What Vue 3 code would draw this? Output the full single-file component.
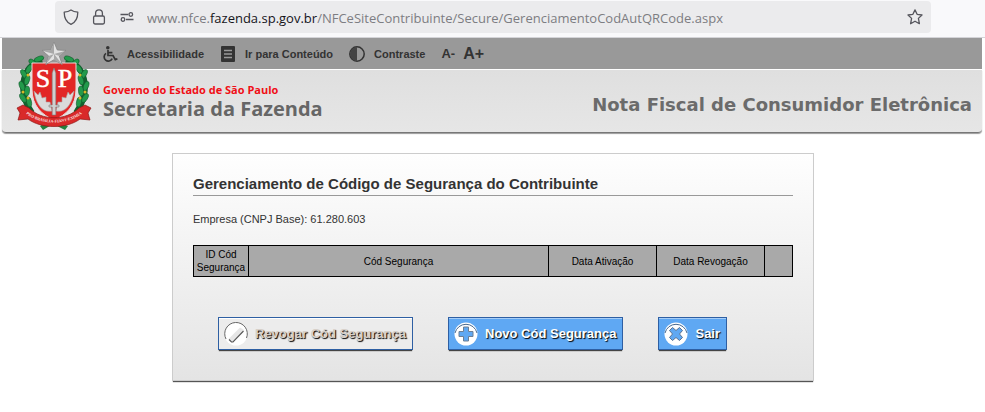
<template>
  <div class="browser-bar">
    <div class="url-box">
      <svg class="url-icon" viewBox="0 0 16 16">
        <path d="M8 1 C6 2.4 3.6 3 1.2 3.2 C1.2 9.2 3.2 13.2 8 15.3 C12.8 13.2 14.8 9.2 14.8 3.2 C12.4 3 10 2.4 8 1 Z" />
      </svg>
      <svg class="url-icon" viewBox="0 0 16 16">
        <rect x="2.6" y="7" width="10.8" height="8" rx="1.4" />
        <path d="M4.6 7 V4.2 a3.4 3.4 0 0 1 6.8 0 V7" />
      </svg>
      <svg class="url-icon" viewBox="0 0 16 16">
        <path d="M1.5 5.5 H9.2 M7 10.5 H14.5" />
        <circle cx="11.8" cy="5.5" r="1.8" />
        <circle cx="4" cy="10.5" r="1.8" />
      </svg>
      <div class="url">www.nfce.<b>fazenda.sp.gov.br</b>/NFCeSiteContribuinte/Secure/GerenciamentoCodAutQRCode.aspx</div>
      <button class="fav" aria-label="Favoritos">
        <svg class="url-icon" viewBox="0 0 16 16">
          <path d="M8 0.9 L10.1 5.3 L15 6 L11.4 9.4 L12.4 14.7 L8 12.2 L3.6 14.7 L4.6 9.4 L1 6 L5.9 5.3 Z" />
        </svg>
      </button>
    </div>
  </div>

  <header class="header">
    <svg class="brasao" viewBox="0 0 78 90">
      <!-- ramos -->
      <path d="M27 19 C4 26 4 54 17 72 M51 19 C74 26 74 54 61 72" fill="none" stroke="#14602f" stroke-width="6" />
      <g v-for="(l, i) in leaves" :key="i" :transform="`translate(${l[0]} ${l[1]}) rotate(${l[2]})`">
        <ellipse rx="5" ry="2.5" fill="#239a4b" stroke="#0f5a2b" stroke-width="0.6" />
      </g>
      <g fill="#d9b928">
        <circle v-for="(b, i) in berries" :key="i" :cx="b[0]" :cy="b[1]" r="1.5" />
      </g>
      <path d="M25 85 L36 78 L53 85 L50 89 L38 83 L28 89 Z" fill="#23823e" />
      <!-- escudo -->
      <path d="M17 22 H61 V48 C61 65 51 74 39 79 C27 74 17 65 17 48 Z" fill="#e22626" stroke="#ead9d9" stroke-width="1" />
      <path d="M37 70 C27 72 21 63 19 50 L23 54 L25 51 L27 57 L31 56 L31 61 L35 61 Z" fill="#dadada" stroke="#b09a9a" stroke-width="0.6" />
      <path d="M41 70 C51 72 57 63 59 50 L55 54 L53 51 L51 57 L47 56 L47 61 L43 61 Z" fill="#dadada" stroke="#b09a9a" stroke-width="0.6" />
      <path d="M39 27 L40.8 32 V64 H44 V66 H40.8 V74 H37.2 V66 H34 V64 H37.2 V32 Z" fill="#cfcfcf" stroke="#7c7c7c" stroke-width="0.6" />
      <text x="28" y="46" class="sigla">S</text>
      <text x="50" y="46" class="sigla">P</text>
      <!-- faixa -->
      <path d="M2 67 L8 64 L14 67 C27 80 51 80 64 67 L70 64 L76 67 L73 72 L75 79 L65 78 C52 88 26 88 13 78 L3 79 L5 72 Z" fill="#d92a2a" stroke="#8e1515" stroke-width="0.7" />
      <path id="faixa" d="M9 71 C24 85 54 85 69 71" fill="none" />
      <text class="lema"><textPath href="#faixa" startOffset="50%">PRO·BRASILIA·FIANT·EXIMIA</textPath></text>
      <!-- estrela -->
      <path d="M39 1 L42.3 9 L51 9.4 L44.3 15 L47.2 23.5 L39 18.7 L30.8 23.5 L33.7 15 L27 9.4 L35.7 9 Z" fill="#e2e2e2" stroke="#858585" stroke-width="0.8" />
      <path d="M39 2 V13 L35.7 9 Z M50 10 L39 13 L44.3 15 Z M46.5 22.5 L39 13 V18.7 Z M31.5 22.5 L39 13 L33.7 15 Z M28 10 L39 13 L35.7 9 Z" fill="#a8a8a8" />
    </svg>

    <nav class="access">
      <a href="#">
        <svg class="ico" viewBox="0 0 16 16">
          <circle cx="5.8" cy="1.8" r="1.8" fill="#333" />
          <path d="M6 4 V9.5 H11 L13.3 13.6 L15.4 12.7 M6.5 6.6 H10.4 M4 7.4 A4.2 4.2 0 1 0 10.2 12.6" fill="none" stroke="#333" stroke-width="1.7" />
        </svg>
        Acessibilidade
      </a>
      <a href="#">
        <svg class="ico" viewBox="0 0 16 16">
          <rect x="1" y="0" width="14" height="16" rx="1" fill="#333" />
          <path d="M4 4.5 H12 M4 8 H12 M4 11.5 H12" stroke="#999" stroke-width="1.4" />
        </svg>
        Ir para Conteúdo
      </a>
      <a href="#">
        <svg class="ico" viewBox="0 0 16 16">
          <circle cx="8" cy="8" r="7.2" fill="#999" stroke="#333" stroke-width="1.5" />
          <path d="M8 1 A7 7 0 0 0 8 15 Z" fill="#444" />
        </svg>
        Contraste
      </a>
      <a href="#" class="menor">A-</a>
      <a href="#" class="maior">A+</a>
    </nav>

    <div class="banner">
      <div class="orgao">
        <span class="governo">Governo do Estado de São Paulo</span>
        <span class="secretaria">Secretaria da Fazenda</span>
      </div>
      <h1>Nota Fiscal de Consumidor Eletrônica</h1>
    </div>
  </header>

  <main class="content">
    <section class="panel">
      <h2>Gerenciamento de Código de Segurança do Contribuinte</h2>
      <p class="empresa">Empresa (CNPJ Base): {{ cnpjBase }}</p>
      <table>
        <colgroup>
          <col class="c-id" />
          <col />
          <col class="c-data" />
          <col class="c-data" />
          <col class="c-sel" />
        </colgroup>
        <thead>
          <tr>
            <th v-for="(c, i) in colunas" :key="i">{{ c }}</th>
          </tr>
        </thead>
      </table>
      <div class="acoes">
        <button class="btn revogar" disabled>
          <svg viewBox="0 0 24 24">
            <circle cx="12" cy="12" r="11.5" fill="#fff" />
            <path d="M2 17 A11.3 11.3 0 1 1 22.5 16" fill="none" stroke="#666" stroke-width="1" />
            <path d="M4.5 17 L16 5.5 L20 8 L9 20 Z" fill="#e6e6e6" />
            <path d="M5 17.5 L7.5 20 H9 L19.5 9" fill="none" stroke="#555" stroke-width="1.1" />
          </svg>
          Revogar Cód Segurança
        </button>
        <button class="btn">
          <svg viewBox="0 0 24 24">
            <circle cx="12" cy="12" r="11.5" fill="#fff" />
            <path d="M1 11 A11.3 11.3 0 0 1 23 11" fill="none" stroke="#46688f" stroke-width="1" />
            <path d="M9.5 5 H14.5 V9.5 H19 V14.5 H14.5 V19 H9.5 V14.5 H5 V9.5 H9.5 Z" fill="#5fa8f3" stroke="#6b7f96" stroke-width="1" stroke-linejoin="round" />
          </svg>
          Novo Cód Segurança
        </button>
        <button class="btn">
          <svg viewBox="0 0 24 24">
            <circle cx="12" cy="12" r="11.5" fill="#fff" />
            <path d="M1 11 A11.3 11.3 0 0 1 23 11" fill="none" stroke="#46688f" stroke-width="1" />
            <path d="M8.5 5.5 L12 8.5 L15.5 5.5 L18.5 8.5 L15.5 12 L18.5 15.5 L15.5 18.5 L12 15.5 L8.5 18.5 L5.5 15.5 L8.5 12 L5.5 8.5 Z" fill="#5fa8f3" stroke="#5a7292" stroke-width="1" stroke-linejoin="round" />
          </svg>
          Sair
        </button>
      </div>
    </section>
  </main>
</template>

<script setup>
import { ref } from "vue";

const cnpjBase = ref("61.280.603");

const colunas = [
  "ID Cód Segurança",
  "Cód Segurança",
  "Data Ativação",
  "Data Revogação",
  "",
];

// folhas do brasão: x, y, rotação (lado esquerdo, espelhado no direito)
const lado = [
  [24, 18, -20],
  [18, 22, 40],
  [14, 28, -60],
  [9, 33, 60],
  [12, 39, -75],
  [7, 45, 70],
  [12, 50, -85],
  [8, 57, 60],
  [14, 61, 80],
];
const leaves = [...lado, ...lado.map(([x, y, r]) => [78 - x, y, -r])];

const frutos = [
  [13, 34],
  [8, 51],
  [13, 57],
  [19, 25],
];
const berries = [...frutos, ...frutos.map(([x, y]) => [78 - x, y])];
</script>

<style>
body {
  margin: 0;
  background: #fff;
  font-family: Arial, "Liberation Sans", sans-serif;
}
</style>

<style scoped>
.browser-bar {
  background: #f9f9fb;
  border-bottom: 1px solid #d4d4d8;
  padding: 1px 54px 4px 55px;
}
.url-box {
  display: flex;
  align-items: center;
  gap: 12px;
  height: 32px;
  padding: 0 8px;
  background: #ebebed;
  border-radius: 4px;
}
.url-icon {
  display: block;
  flex-shrink: 0;
  width: 16px;
  height: 16px;
  fill: none;
  stroke: #55555c;
  stroke-width: 1.3;
  stroke-linejoin: round;
}
.url {
  flex: 1;
  min-width: 0;
  overflow: hidden;
  white-space: nowrap;
  font-family: "Open Sans", sans-serif;
  font-size: 13px;
  line-height: 20px;
  padding-top: 2px;
  color: #7d7d82;
}
.url b {
  font-weight: 400;
  color: #15141a;
}
.fav {
  padding: 0;
  border: none;
  background: none;
  cursor: pointer;
}

.header {
  position: relative;
  margin: 0 3px 0 2px;
}
.brasao {
  position: absolute;
  left: 13px;
  top: 3px;
  width: 78px;
  height: 90px;
}
.sigla {
  font-family: "Liberation Serif", serif;
  font-size: 26px;
  text-anchor: middle;
  fill: #fff;
  stroke: #fff;
  stroke-width: 0.5;
}
.lema {
  font-family: "Liberation Serif", serif;
  font-size: 4px;
  font-weight: 700;
  text-anchor: middle;
  fill: #fbe4e4;
}
.access {
  display: flex;
  align-items: center;
  gap: 16px;
  height: 31px;
  padding-left: 100px;
  background: #999;
}
.access a {
  display: flex;
  align-items: center;
  gap: 9px;
  color: #333;
  font-size: 11px;
  font-weight: 700;
  text-decoration: none;
}
.ico {
  width: 16px;
  height: 16px;
}
.access .menor {
  font-size: 13px;
}
.access .maior {
  margin-left: -8px;
  font-size: 16px;
}
.banner {
  display: flex;
  align-items: center;
  justify-content: space-between;
  height: 63px;
  margin-top: 1px;
  padding: 0 10px 0 101px;
  background: linear-gradient(#dfdfdf, #e6e6e6);
  border-bottom: 1px solid #777;
  border-radius: 0 0 4px 4px;
  box-shadow: 0 1px 1px #999;
  box-sizing: border-box;
}
.orgao {
  display: flex;
  flex-direction: column;
  font-family: "Open Sans", sans-serif;
  font-weight: 700;
}
.governo {
  font-size: 11px;
  line-height: 16px;
  color: #f00f16;
}
.secretaria {
  font-size: 20px;
  line-height: 22px;
  color: #666;
}
h1 {
  margin: 8px 0 0;
  font-family: "DejaVu Sans", Verdana, sans-serif;
  font-size: 18px;
  line-height: 24px;
  color: #6b6b6b;
}

.content {
  padding: 20px 0 20px 1px;
}
.panel {
  box-sizing: border-box;
  max-width: 642px;
  margin: 0 auto;
  padding: 20px 20px 30px;
  background: linear-gradient(#fefefe, #e4e4e4);
  border: 1px solid #ccc;
  box-shadow: 0 2px 1px -1px #555;
}
h2 {
  margin: 0;
  padding-bottom: 1px;
  border-bottom: 1px solid #999;
  font-size: 15px;
  line-height: 20px;
  color: #333;
}
.empresa {
  margin: 16px 0 18px;
  font-size: 11px;
  line-height: 15px;
  color: #333;
}
table {
  width: 100%;
  table-layout: fixed;
  border-collapse: collapse;
}
.c-id {
  width: 55px;
}
.c-data {
  width: 108px;
}
.c-sel {
  width: 28px;
}
th {
  height: 30px;
  padding: 0;
  border: 1px solid #000;
  background: #a9a9a9;
  font-size: 10px;
  font-weight: 400;
  line-height: 13px;
  color: #000;
}
.acoes {
  display: flex;
  flex-wrap: wrap;
  gap: 35px;
  margin-top: 40px;
  padding-left: 25px;
}
.btn {
  display: flex;
  align-items: center;
  gap: 7px;
  height: 33px;
  padding: 0 6px 0 5px;
  border: 1px solid #2e5fa3;
  background: #5fa8f3;
  box-shadow:
    inset 0 1px 0 #a5cdf8,
    0 2px 1px -1px #444;
  color: #fff;
  font-family: inherit;
  font-size: 13px;
  font-weight: 700;
  text-shadow: 1px 1px 1px #000;
  cursor: pointer;
}
.btn svg {
  width: 24px;
  height: 24px;
}
.revogar {
  background: #ececec;
  box-shadow:
    inset 0 1px 0 #fff,
    0 2px 1px -1px #444;
  color: #d8d0c8;
  cursor: default;
}
</style>
